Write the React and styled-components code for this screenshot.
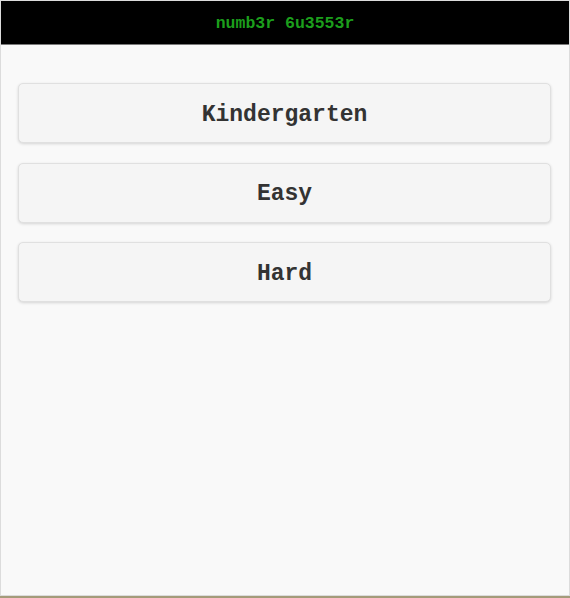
import React from 'react';
import styled, { createGlobalStyle } from 'styled-components';

const GlobalStyle = createGlobalStyle`
  html, body {
    margin: 0;
    padding: 0;
    background-color: #a49b7a;
  }
`;

const Frame = styled.div`
  box-sizing: border-box;
  width: 570px;
  height: 596px;
  border: 1px solid #dcdcdc;
  background-color: #f9f9f9;
  display: flex;
  flex-direction: column;
`;

const Header = styled.div`
  height: 44px;
  background-color: #000;
  border-bottom: 1px solid #7a7a7a;
  display: flex;
  align-items: center;
  justify-content: center;
  font-family: 'Liberation Mono', 'Courier New', monospace;
  font-weight: bold;
  font-size: 16.5px;
  color: #1c9e1c;
  padding-top: 2px;
  box-sizing: border-box;
`;

const Menu = styled.div`
  display: flex;
  flex-direction: column;
  gap: 19.5px;
  padding: 38px 18px 0 17px;
`;

const LevelButton = styled.button`
  height: 60px;
  padding-top: 4px;
  border: 1px solid #e0e0e0;
  border-radius: 5px;
  background-color: #f5f5f5;
  box-shadow: 0px 1px 3px rgba(0, 0, 0, 0.15);
  font-family: 'Liberation Mono', 'Courier New', monospace;
  font-weight: bold;
  font-size: 23px;
  color: #333;
  cursor: pointer;
`;

const levels = ['Kindergarten', 'Easy', 'Hard'];

const App = () => {
  return (
    <>
      <GlobalStyle />
      <Frame>
        <Header>numb3r 6u3553r</Header>
        <Menu>
          {levels.map((level) => (
            <LevelButton key={level}>{level}</LevelButton>
          ))}
        </Menu>
      </Frame>
    </>
  );
};

export default App;
